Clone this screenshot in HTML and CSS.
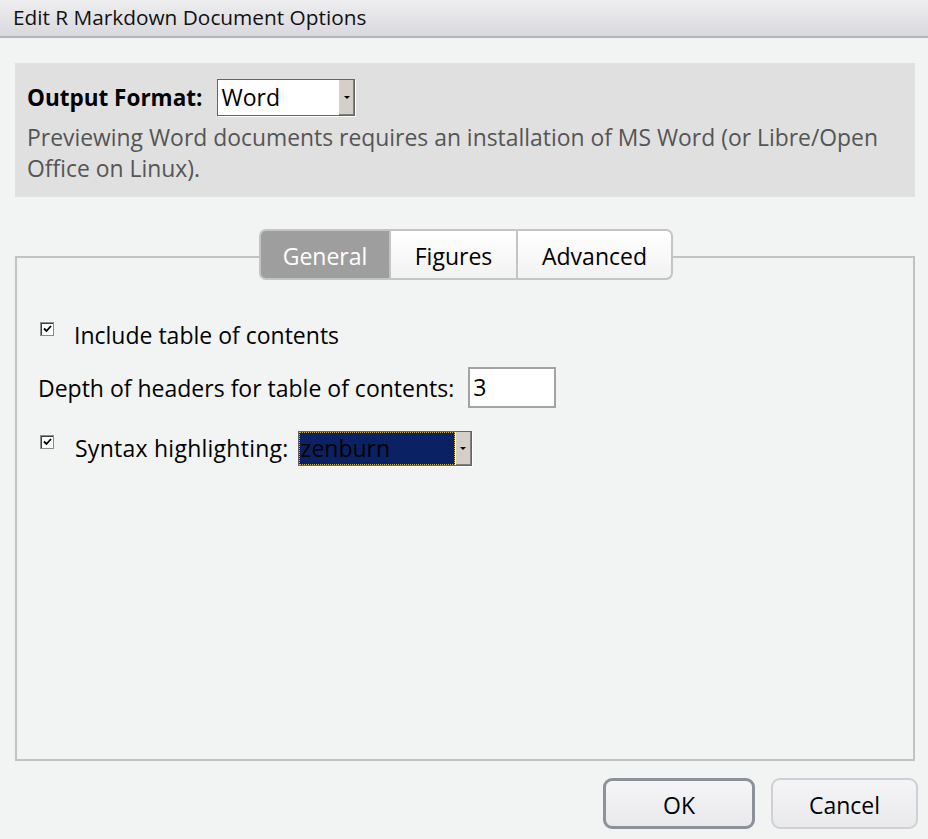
FILE: index.html
```html
<!DOCTYPE html>
<html>
<head>
<meta charset="utf-8">
<title>Edit R Markdown Document Options</title>
<link rel="stylesheet" href="styles.css">
</head>
<body>
<div class="window">
  <div class="titlebar">Edit R Markdown Document Options</div>
  <div class="body">
    <div class="format-panel">
      <div class="format-row">
        <span class="format-label">Output Format:</span>
        <div class="combo combo-word">
          <span class="combo-value">Word</span>
          <span class="combo-btn"><span class="arrow"></span></span>
        </div>
      </div>
      <p class="format-note">Previewing Word documents requires an installation of MS Word (or Libre/Open<br>Office on Linux).</p>
    </div>

    <div class="tabs">
      <div class="tab tab-general active">General</div>
      <div class="tab tab-figures">Figures</div>
      <div class="tab tab-advanced">Advanced</div>
    </div>
    <div class="tab-panel">
      <div class="row row-toc">
        <span class="check"><svg width="9" height="8" viewBox="0 0 9 8"><path d="M1 3.5 L3.5 6 L8 1" fill="none" stroke="#000" stroke-width="1.8"/></svg></span>
        <span class="label">Include table of contents</span>
      </div>
      <div class="row row-depth">
        <span class="label">Depth of headers for table of contents:</span>
        <div class="textbox">3</div>
      </div>
      <div class="row row-syntax">
        <span class="check"><svg width="9" height="8" viewBox="0 0 9 8"><path d="M1 3.5 L3.5 6 L8 1" fill="none" stroke="#000" stroke-width="1.8"/></svg></span>
        <span class="label">Syntax highlighting:</span>
        <div class="combo combo-syntax">
          <span class="combo-value selected">zenburn</span>
          <span class="combo-btn"><span class="arrow"></span></span>
        </div>
      </div>
    </div>

    <div class="buttons">
      <div class="btn btn-ok">OK</div>
      <div class="btn btn-cancel">Cancel</div>
    </div>
  </div>
</div>
</body>
</html>
```
FILE: styles.css
```css
* { box-sizing: border-box; }
html, body { margin: 0; padding: 0; }
body {
  background: #f2f4f3;
  font-family: "Open Sans", "Noto Sans", sans-serif;
  color: #000;
  width: 928px;
  height: 839px;
  overflow: hidden;
}
.window { width: 928px; height: 839px; }
.titlebar {
  height: 38px;
  background: linear-gradient(#eeeef0, #d9d9dd);
  border-bottom: 2px solid #b3b3b8;
  font-size: 20.8px;
  line-height: 34px;
  padding-left: 13px;
  color: #111;
  white-space: nowrap;
}
.body { padding: 25px 13px 0 15px; }
.format-panel {
  background: #e0e0e0;
  height: 134px;
  padding: 16px 12px 0 12px;
}
.format-row { display: flex; align-items: center; gap: 15px; }
.format-label { font-weight: 700; font-size: 22.5px; }
.combo {
  display: flex;
  border: 1px solid #646464;
  background: #fff;
  box-shadow: 1px 1px 0 #fff;
}
.combo-word { width: 138px; height: 37px; }
.combo-value { flex: 1; font-size: 23px; line-height: 34px; padding-left: 3px; white-space: nowrap; overflow: hidden; }
.combo-btn {
  width: 16px;
  background: #d4d0c8;
  border-left: 1px solid #fff;
  box-shadow: inset -1px -1px 0 #808080;
  display: flex;
  align-items: center;
  justify-content: center;
}
.arrow {
  width: 0; height: 0;
  border-left: 3px solid transparent;
  border-right: 3px solid transparent;
  border-top: 3px solid #000;
}
.format-note {
  margin: 6px 0 0 0;
  color: #555;
  font-size: 22.9px;
  line-height: 31px;
  white-space: nowrap;
}
.tabs {
  display: flex;
  justify-content: center;
  margin-top: 32px;
  position: relative;
  z-index: 1;
  padding-left: 2px;
}
.tab {
  height: 51px;
  border: 2px solid #c4c4c4;
  background: linear-gradient(#ffffff, #f2f2f2);
  font-size: 23px;
  line-height: 50px;
  text-align: center;
}
.tab + .tab { border-left: none; }
.tab-general { width: 132px; border-radius: 7px 0 0 7px; }
.tab-figures { width: 127px; }
.tab-advanced { width: 155px; border-radius: 0 7px 7px 0; }
.tab.active { background: #9e9e9e; color: #fff; }
.tab-panel {
  margin-top: -24px;
  height: 505px;
  border: 2px solid #c2c2c2;
  padding: 59px 0 0 0;
}
.row { display: flex; align-items: center; font-size: 23px; white-space: nowrap; }
.check {
  width: 14px; height: 14px;
  border: 1px solid #8c8c8c;
  background: #fff;
  box-shadow: inset 1px 1px 0 #404040;
  display: flex; align-items: center; justify-content: center;
  align-self: flex-start;
  margin-top: 5px;
}
.row-toc { padding-left: 23px; height: 36px; }
.row-toc .label { margin-left: 20px; }
.row-depth { padding-left: 21px; margin-top: 14px; }
.textbox {
  margin-left: 14px;
  width: 88px; height: 41px;
  border: 2px solid #a3a3a3;
  background: #fff;
  font-size: 23px;
  line-height: 36px;
  padding-left: 3px;
}
.row-syntax { padding-left: 23px; margin-top: 22px; height: 36px; }
.row-syntax .label { margin-left: 21px; letter-spacing: 0.25px; }
.combo-syntax {
  margin-left: 9px;
  width: 174px; height: 35px;
  border: 1px solid #646464;
}
.combo-syntax .combo-value.selected {
  background: #0a2263;
  color: #000;
  outline: 1px dotted #c8b060;
  outline-offset: -1px;
  line-height: 32px;
  padding-left: 2px;
}
.buttons {
  display: flex;
  justify-content: flex-end;
  gap: 16px;
  margin-top: 17px;
  margin-right: -3px;
}
.btn {
  height: 51px;
  border-radius: 9px;
  background: linear-gradient(#f5f5f7, #e9e9ec);
  border: 2px solid #cfd0d4;
  font-size: 23px;
  line-height: 50px;
  text-align: center;
}
.btn-ok { width: 152px; border: 3px solid #8d9199; line-height: 48px; }
.btn-cancel { width: 147px; }
```
